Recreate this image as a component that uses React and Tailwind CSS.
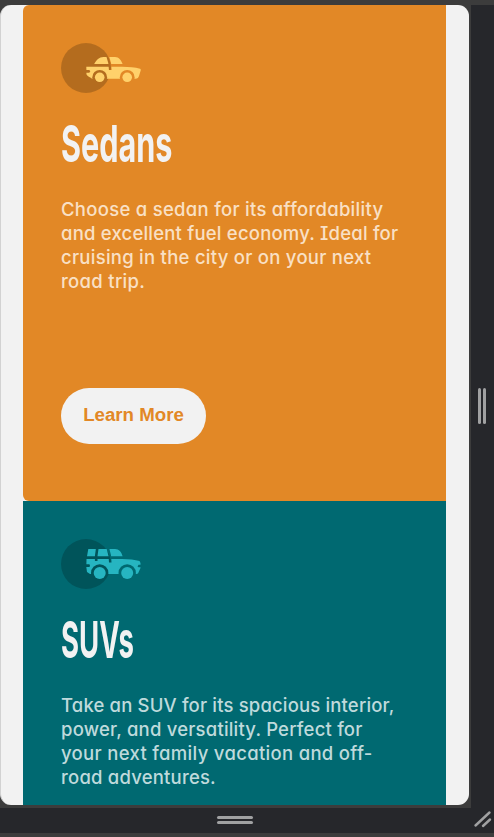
const SedanIcon = () => (
  <svg width="80" height="50" viewBox="0 0 80 50" className="block">
    <circle cx="25" cy="25" r="25" fill="#000" opacity=".2" />
    <mask id="sedan-cut">
      <rect width="80" height="50" fill="#fff" />
      <circle cx="38.7" cy="34.3" r="7.4" fill="#000" />
      <circle cx="66.2" cy="34.3" r="7.4" fill="#000" />
      <path d="M46.6 13C48.6 18 49.3 21 49.3 27" stroke="#000" strokeWidth="2.7" fill="none" />
      <path d="M25 27h3.300l1 1.200-1 1.500H25z" fill="#000" />
    </mask>
    <g fill="#ffd16b">
      <path mask="url(#sedan-cut)" d="M33.2 21C35.5 17 38 14 42.500 14H54c4 0 6.400 3.500 7.600 7zM25.300 23.700H61c7 .1 13 .6 18 2 .8.200.9 1 .7 1.800L78 33c-.5 1.600-1.500 2.800-3.500 2.800H31c-2-2-5.600-2.600-5.600-5.300V27z" />
      <circle cx="38.700" cy="34.300" r="4.800" />
      <circle cx="66.200" cy="34.300" r="4.800" />
    </g>
  </svg>
);

const SuvIcon = () => (
  <svg width="80" height="50" viewBox="0 0 80 50" className="block">
    <circle cx="25" cy="25" r="25" fill="#000" opacity=".2" />
    <mask id="suv-cut">
      <rect width="80" height="50" fill="#fff" />
      <circle cx="38.7" cy="34" r="8.7" fill="#000" />
      <circle cx="66.2" cy="34" r="8.7" fill="#000" />
      <path d="M46.800 9C48.500 14 49.300 18 49.300 23.500M36.300 9L35.200 17V22" stroke="#000" strokeWidth="2.600" fill="none" />
      <path d="M25 25.200h3.500l.5 1.500-.5 1.300H25zM80 25.800h-2.500l-1 1.700 1 .8H80z" fill="#000" />
    </mask>
    <g fill="#26b5c1">
      <path mask="url(#suv-cut)" d="M27.300 10H54c4 0 6.500 3 7.600 7.300H26zM25.500 20H61c7 .2 13 .8 17.500 2l1 2v5L77 34.500 75.500 35H29l-3-2-.7-5z" />
      <circle cx="38.700" cy="34" r="6" />
      <circle cx="66.200" cy="34" r="6" />
    </g>
  </svg>
);

const Line = ({ children, className = "" }) => (
  <span className={`block h-6 whitespace-nowrap ${className}`}>{children}</span>
);

const headingFont =
  "mt-[21px] h-[60px] origin-left whitespace-nowrap font-['Inter',sans-serif] text-[51px] font-bold leading-[60px] text-[#f2f2f2]";

const bodyFont =
  "mt-[23px] font-['Inter',sans-serif] text-[18.5px] font-medium leading-6 tracking-[0.2px] [font-feature-settings:'cv11','cv08','ss02'_0]";

export default function App() {
  return (
    <div className="flex h-[837px] w-[494px] flex-col overflow-hidden bg-[#3c3c3c] pt-[5px]">
      <div className="flex h-[803px]">
        <main className="h-[800px] w-[469px] overflow-hidden rounded-[11px] border-l border-[#d2d2d2] bg-[#f2f2f2] pl-[22px]">
          <section className="h-[496px] w-[423px] rounded-l-[6px] bg-[#e28826] px-[38px] pt-[38px]">
            <SedanIcon />
            <h2 className={`${headingFont} w-[200px] scale-x-[0.6]`}>Sedans</h2>
            <p className={`${bodyFont} text-[#f9e0c5]`}>
              <Line className="tracking-[0.28px]">Choose a sedan for its affordability</Line>
              <Line>and excellent fuel economy. Ideal for</Line>
              <Line className="tracking-[0.26px]">cruising in the city or on your next</Line>
              <Line className="tracking-[0.3px]">road trip.</Line>
            </p>
            <button className="mt-[95px] block h-14 w-[145px] rounded-full bg-[#f2f2f2] pb-px font-['Liberation_Sans',Arial,sans-serif] text-[18.7px] font-bold text-[#e28826]">
              Learn More
            </button>
          </section>
          <section className="h-[496px] w-[423px] bg-[#006971] px-[38px] pt-[38px]">
            <SuvIcon />
            <h2 className={`${headingFont} w-[200px] scale-x-[0.54]`}>SUVs</h2>
            <p className={`${bodyFont} text-[#bfdadc]`}>
              <Line className="tracking-[0.16px]">Take an SUV for its spacious interior,</Line>
              <Line>power, and versatility. Perfect for</Line>
              <Line className="tracking-[0.31px]">your next family vacation and off-</Line>
              <Line>road adventures.</Line>
            </p>
          </section>
        </main>
        <div className="ml-[2px] flex w-[23px] justify-center gap-[2px] bg-[#26272b] pr-[2px] pt-[383px]">
          <span className="h-9 w-[3px] rounded-sm bg-[#a0a1a2]" />
          <span className="h-9 w-[3px] rounded-sm bg-[#a0a1a2]" />
        </div>
      </div>
      <div className="flex h-[25px] justify-end bg-[#26272b]">
        <div className="flex w-[469px] flex-col items-center gap-[2px] pt-2">
          <span className="h-[3px] w-9 rounded-sm bg-[#a0a1a2]" />
          <span className="h-[3px] w-9 rounded-sm bg-[#a0a1a2]" />
        </div>
        <svg width="25" height="25" viewBox="0 0 25 25" className="block">
          <path d="M6.500 17.500L20.500 4.500M14 18L21 11.500" stroke="#a0a1a2" strokeWidth="2.400" strokeLinecap="round" />
        </svg>
      </div>
    </div>
  );
}
